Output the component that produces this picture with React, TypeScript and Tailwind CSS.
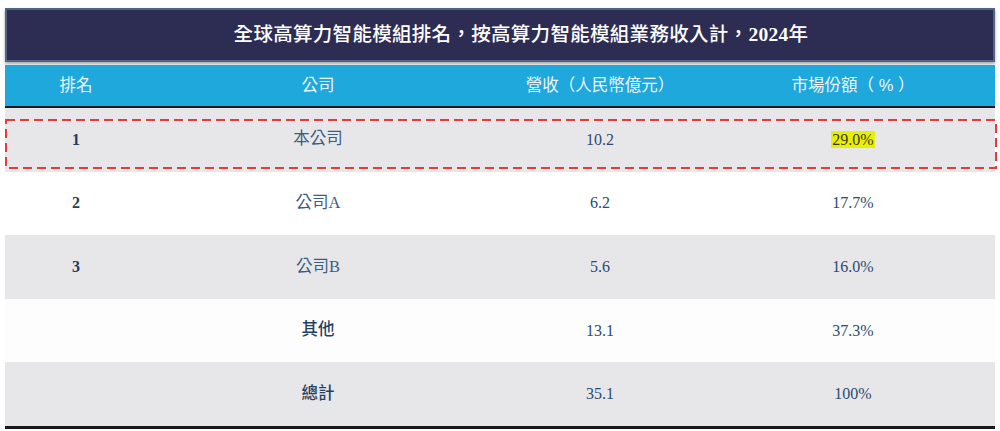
import React from "react";

const serif = "font-['Liberation_Serif','Noto_Sans_CJK_TC',serif]";
const sans = "font-['Liberation_Sans','Noto_Sans_CJK_TC',sans-serif]";

type Row = { rank: string; name: string; rev: string; share: string; bg: string; hl?: boolean; boldName?: boolean };

const rows: Row[] = [
  { rank: "1", name: "本公司", rev: "10.2", share: "29.0%", bg: "bg-[#e7e7ea]", hl: true },
  { rank: "2", name: "公司A", rev: "6.2", share: "17.7%", bg: "bg-white" },
  { rank: "3", name: "公司B", rev: "5.6", share: "16.0%", bg: "bg-[#e7e7ea]" },
  { rank: "", name: "其他", rev: "13.1", share: "37.3%", bg: "bg-[#fdfdfd]", boldName: true },
  { rank: "", name: "總計", rev: "35.1", share: "100%", bg: "bg-[#e7e7ea]", boldName: true },
];

export default function App() {
  return (
    <div className="w-[1000px] h-[431px] bg-white pt-[8px] pl-[5px]">
      <div className="w-[990px]">
        <div className="h-[54px] bg-[#2d2d54] border-2 border-[#4f6585] shadow-[0_2px_3px_rgba(0,0,0,0.35)] flex items-center justify-center pl-[42px]">
          <span className={`${serif} text-white font-medium text-[19.5px] tracking-[0.3px]`}>
            全球高算力智能模組排名，按高算力智能模組業務收入計，<span className="font-bold">2024</span>年
          </span>
        </div>
        <div className="mt-[3px] h-[41px] bg-[#1ea8dc] grid grid-cols-[142px_342px_222px_284px] items-center text-[#eef5fa] text-[16.5px]">
          <div className={`${sans} text-center`}>排名</div>
          <div className={`${sans} text-center`}>公司</div>
          <div className={`${sans} text-center`}>營收（人民幣億元）</div>
          <div className={`${sans} text-center`}>市場份額（ % ）</div>
        </div>
        <div className="h-[2px] bg-[#1a1a1a]" />
        {rows.map((r, i) => (
          <div
            key={i}
            className={`relative h-[63.6px] ${r.bg} grid grid-cols-[142px_342px_222px_284px] items-center text-[#2b4a6f] text-[16px]`}
          >
            <div className={`${serif} font-bold text-center text-[#233d5e]`}>{r.rank}</div>
            <div className={`${serif} text-center text-[16.5px] ${r.boldName ? "font-medium text-[#243f62]" : "text-[#3d5c82]"}`}>{r.name}</div>
            <div className={`${serif} text-center`}>{r.rev}</div>
            <div className={`${serif} text-center`}>
              {r.hl ? <span className="bg-[#e8ef00] text-[#3a3a20] px-[1px]">{r.share}</span> : r.share}
            </div>
            {r.hl && (
              <svg className="absolute left-0 top-[11px]" width="992" height="50">
                <rect x="1" y="1" width="990" height="48" fill="none" stroke="#e63b3b" strokeWidth="2" strokeDasharray="9 5" />
              </svg>
            )}
          </div>
        ))}
        <div className="h-[3px] bg-[#1a1a1a]" />
      </div>
    </div>
  );
}
